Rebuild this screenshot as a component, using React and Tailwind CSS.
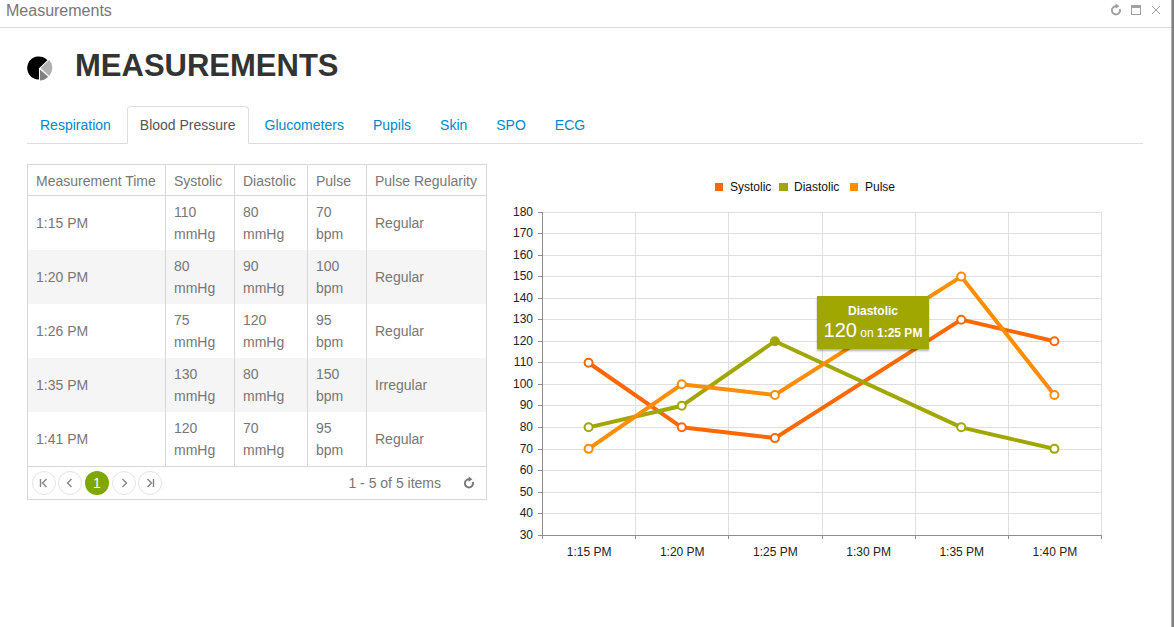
const TABS = ["Respiration", "Blood Pressure", "Glucometers", "Pupils", "Skin", "SPO", "ECG"];

const COLUMNS = ["Measurement Time", "Systolic", "Diastolic", "Pulse", "Pulse Regularity"];

const ROWS = [
  ["1:15 PM", "110 mmHg", "80 mmHg", "70 bpm", "Regular"],
  ["1:20 PM", "80 mmHg", "90 mmHg", "100 bpm", "Regular"],
  ["1:26 PM", "75 mmHg", "120 mmHg", "95 bpm", "Regular"],
  ["1:35 PM", "130 mmHg", "80 mmHg", "150 bpm", "Irregular"],
  ["1:41 PM", "120 mmHg", "70 mmHg", "95 bpm", "Regular"],
];

const TIMES = ["1:15 PM", "1:20 PM", "1:25 PM", "1:30 PM", "1:35 PM", "1:40 PM"];

const SERIES = [
  { name: "Systolic", color: "#ff6800", legendX: 208, values: [110, 80, 75, null, 130, 120] },
  { name: "Diastolic", color: "#a0a700", legendX: 272, values: [80, 90, 120, null, 80, 70] },
  { name: "Pulse", color: "#ff8d00", legendX: 343, values: [70, 100, 95, null, 150, 95] },
];

const CHART = { width: 636, height: 410, left: 35, right: 594, top: 48, bottom: 371, min: 30, max: 180 };

const slot = (CHART.right - CHART.left) / TIMES.length;
const xAt = (i) => CHART.left + slot * (i + 0.5);
const yAt = (v) =>
  CHART.bottom - ((v - CHART.min) / (CHART.max - CHART.min)) * (CHART.bottom - CHART.top);
const gridY = (v) => Math.floor(yAt(v) + 0.2) + 0.5;
const gridX = (i) => Math.round(CHART.left + slot * i) + 0.5;

function ReloadIcon({ className }) {
  return (
    <svg viewBox="0 0 12 12" className={className} aria-hidden="true">
      <path d="M9.8 5A4.1 4.1 0 1 1 6.4 2.3" fill="none" stroke="currentColor" strokeWidth="1.9" />
      <path d="M5.6 -0.4L9.4 2.2L5.6 4.8z" fill="currentColor" />
    </svg>
  );
}

function PieIcon() {
  return (
    <svg viewBox="0 0 26 26" className="mt-[6px] size-[26px] shrink-0" aria-hidden="true">
      <path d="M12 12.2L20.4 4.2A11.6 11.6 0 1 0 12 23.6z" fill="#000" />
      <path d="M13.6 12L22.2 3.9A11.8 11.8 0 0 1 22.2 19.9z" fill="#b0b0b0" />
      <path d="M13 13.4L21.2 20.8A11.6 11.6 0 0 1 13 24.6z" fill="#808080" />
    </svg>
  );
}

function WindowBar() {
  return (
    <header className="flex h-7 items-start justify-between border-b border-[#dadada] pr-[9px] pl-[6px] text-[#777]">
      <span className="text-base leading-[22px]">Measurements</span>
      <div className="flex gap-2 pt-1 text-[#a0a0a0]">
        <button type="button" aria-label="Refresh" className="size-3">
          <ReloadIcon className="size-3 overflow-visible" />
        </button>
        <button type="button" aria-label="Maximize" className="size-3">
          <svg viewBox="0 0 12 12" className="size-3" aria-hidden="true">
            <path d="M1 1h10v10H1zM2 4v6h8V4z" fill="currentColor" fillRule="evenodd" />
          </svg>
        </button>
        <button type="button" aria-label="Close" className="size-3">
          <svg viewBox="0 0 12 12" className="size-3" aria-hidden="true">
            <path d="M2 2l8 8M10 2l-8 8" fill="none" stroke="currentColor" strokeWidth="1" />
          </svg>
        </button>
      </div>
    </header>
  );
}

function Tabs() {
  return (
    <nav className="mb-5 flex gap-[3px] border-b border-[#ddd]">
      {TABS.map((tab) => (
        <a
          key={tab}
          href="#"
          aria-current={tab === "Blood Pressure" ? "page" : undefined}
          className={
            tab === "Blood Pressure"
              ? "-mb-px rounded-t border border-[#ddd] border-b-white bg-white px-3 py-2 text-[#555]"
              : "-mb-px border border-transparent px-3 py-2 text-[#0088cc]"
          }
        >
          {tab}
        </a>
      ))}
    </nav>
  );
}

function PagerButton({ label, path }) {
  return (
    <button
      type="button"
      aria-label={label}
      className="flex size-6 items-center justify-center rounded-full border border-[#e4e4e4] text-[#858585]"
    >
      <svg viewBox="0 0 12 12" className="size-3" aria-hidden="true">
        <path d={path} fill="none" stroke="currentColor" strokeWidth="1.4" />
      </svg>
    </button>
  );
}

function Grid() {
  return (
    <section className="w-[460px] shrink-0 border border-[#d8d8d8] text-[#777]">
      <table className="w-full table-fixed border-collapse text-left">
        <colgroup>
          <col className="w-[137px]" />
          <col className="w-[69px]" />
          <col className="w-[73px]" />
          <col className="w-[59px]" />
          <col />
        </colgroup>
        <thead>
          <tr className="h-[31px] shadow-[inset_0_-1px_#d8d8d8]">
            {COLUMNS.map((c) => (
              <th
                key={c}
                className="px-2 py-1 font-normal whitespace-nowrap shadow-[inset_1px_0_#d8d8d8] first:shadow-none not-first:pl-[9px]"
              >
                {c}
              </th>
            ))}
          </tr>
        </thead>
        <tbody className="leading-[22px]">
          {ROWS.map((row) => (
            <tr key={row[0]} className="even:bg-[#f5f5f5]">
              {row.map((cell, i) => (
                <td
                  key={COLUMNS[i]}
                  className="px-2 py-[5px] shadow-[inset_1px_0_#d8d8d8] first:shadow-none not-first:pl-[9px]"
                >
                  {cell}
                </td>
              ))}
            </tr>
          ))}
        </tbody>
      </table>
      <div className="flex h-[33px] items-center gap-[2px] border-t border-[#d8d8d8] pr-[11px] pl-1">
        <PagerButton label="First page" path="M2.5 2v8M8.5 2L4.5 6l4 4" />
        <PagerButton label="Previous page" path="M7.5 2L3.5 6l4 4" />
        <button
          type="button"
          aria-current="page"
          className="mx-px size-6 rounded-full bg-[#7ea700] text-center leading-6 text-white"
        >
          1
        </button>
        <PagerButton label="Next page" path="M4.5 2l4 4l-4 4" />
        <PagerButton label="Last page" path="M3.5 2l4 4l-4 4M9.5 2v8" />
        <span className="ml-auto">1 - 5 of 5 items</span>
        <button type="button" aria-label="Reload" className="ml-5 size-3">
          <ReloadIcon className="size-3 overflow-visible" />
        </button>
      </div>
    </section>
  );
}

function Chart() {
  const ticks = [];
  for (let v = CHART.min; v <= CHART.max; v += 10) ticks.push(v);
  const bounds = [...TIMES.keys(), TIMES.length];

  return (
    <figure className="relative min-w-0 flex-1 self-start">
      <svg
        viewBox={`0 0 ${CHART.width} ${CHART.height}`}
        className="block h-auto w-full text-xs"
        role="img"
        aria-label="Blood pressure chart"
      >
        {SERIES.map((s) => (
          <g key={s.name}>
            <rect x={s.legendX} y="19" width={s.name === "Diastolic" ? 9 : 8} height="8" fill={s.color} />
            <text x={s.legendX + 15} y="27" fill="#111">
              {s.name}
            </text>
          </g>
        ))}

        <g stroke="#dfdfdf" strokeWidth="1">
          {ticks.slice(1).map((v) => (
            <path key={v} d={`M${CHART.left} ${gridY(v)}H${CHART.right + 1}`} />
          ))}
          {bounds.slice(1).map((i) => (
            <path key={i} d={`M${gridX(i)} ${CHART.top}V${CHART.bottom}`} />
          ))}
        </g>
        <g stroke="#8e8e8e" strokeWidth="1">
          <path d={`M${CHART.left + 0.5} ${CHART.top}V${CHART.bottom + 1}`} />
          <path d={`M${CHART.left} ${CHART.bottom + 0.5}H${CHART.right + 1}`} />
          {ticks.map((v) => (
            <path key={v} d={`M${CHART.left - 4} ${gridY(v)}h4`} />
          ))}
          {bounds.map((i) => (
            <path key={i} d={`M${gridX(i)} ${CHART.bottom}v4`} />
          ))}
        </g>

        <g fill="#232323" textAnchor="end">
          {ticks.map((v) => (
            <text key={v} x="26" y={Math.floor(gridY(v)) + 4}>
              {v}
            </text>
          ))}
        </g>
        <g fill="#232323" textAnchor="middle">
          {TIMES.map((t, i) => (
            <text key={t} x={xAt(i) + 0.5} y="392">
              {t}
            </text>
          ))}
        </g>

        {SERIES.map((s) => (
          <polyline
            key={s.name}
            points={s.values
              .map((v, i) => (v === null ? null : `${xAt(i)},${yAt(v)}`))
              .filter(Boolean)
              .join(" ")}
            fill="none"
            stroke={s.color}
            strokeWidth="4"
          />
        ))}
        {SERIES.map((s) =>
          s.values.map((v, i) =>
            v === null ? null : (
              <circle
                key={s.name + i}
                cx={xAt(i)}
                cy={yAt(v)}
                r="4"
                fill={s.name === "Diastolic" && i === 2 ? s.color : "#fff"}
                stroke={s.color}
                strokeWidth="2"
              />
            )
          )
        )}
      </svg>
      <div
        className="absolute flex h-[53px] w-28 flex-col items-center bg-[#a0a700] pt-[6px] text-xs font-bold whitespace-nowrap text-white shadow-[0_2px_2px_rgba(0,0,0,0.3)]"
        style={{ left: `${(310 / CHART.width) * 100}%`, top: `${(132 / CHART.height) * 100}%` }}
      >
        <span className="leading-[18px]">Diastolic</span>
        <span className="leading-5">
          <span className="text-xl leading-5 font-normal">120</span>{" "}
          <span className="font-normal">on</span> 1:25 PM
        </span>
      </div>
    </figure>
  );
}

export default function App() {
  return (
    <div className="min-h-screen border-r-2 border-[#808080] bg-white font-['Liberation_Sans',Arial,sans-serif] text-sm leading-5">
      <div className="min-h-screen border-r border-[#b4b4b4]">
        <WindowBar />
        <main className="pt-[18px] pr-7 pl-[27px]">
          <div className="mb-5 flex items-center gap-[22px]">
            <PieIcon />
            <h1 className="text-[31px] leading-10 font-bold text-[#333]">MEASUREMENTS</h1>
          </div>
          <Tabs />
          <div className="flex items-start gap-5">
            <Grid />
            <Chart />
          </div>
        </main>
      </div>
    </div>
  );
}
